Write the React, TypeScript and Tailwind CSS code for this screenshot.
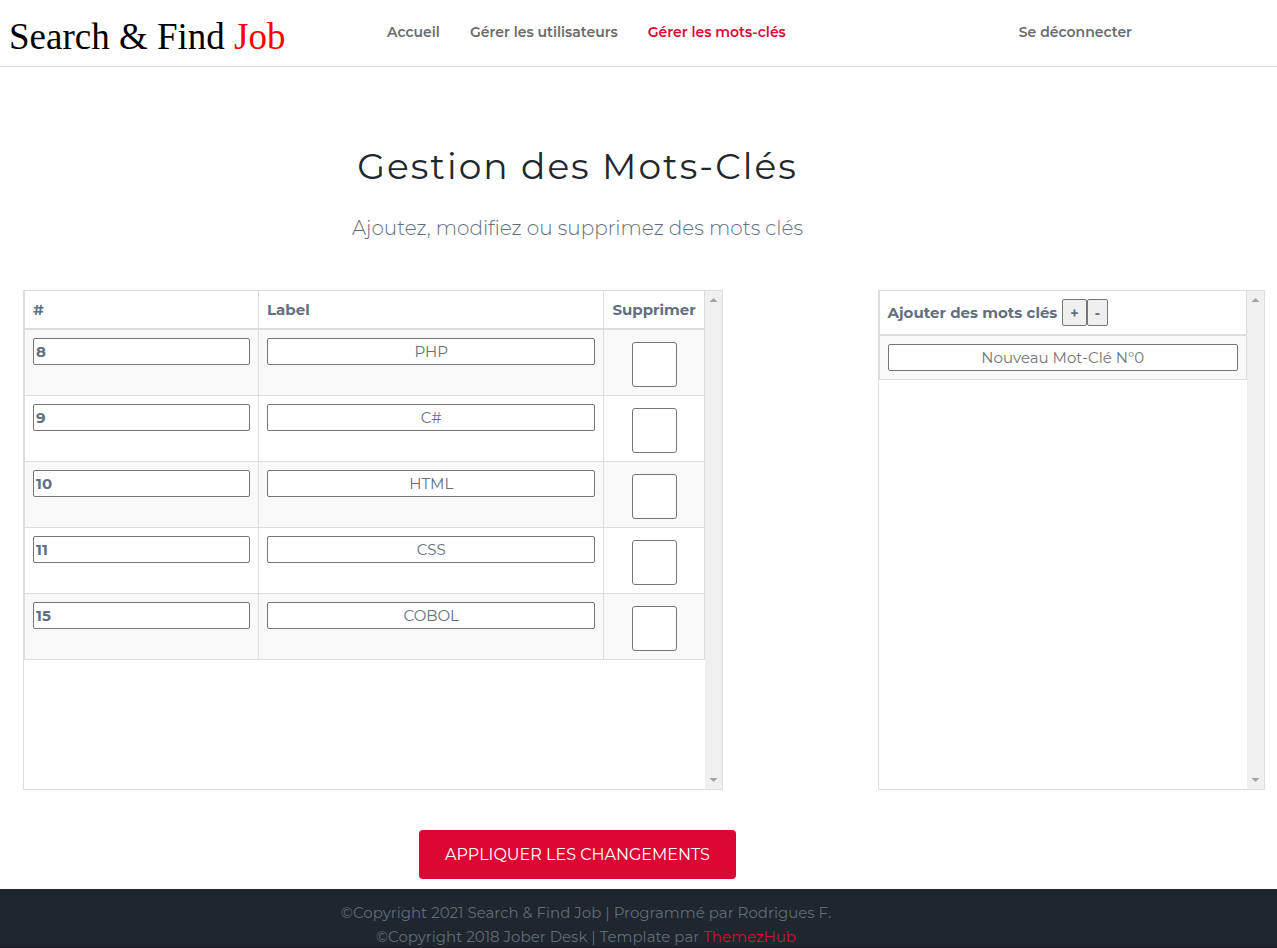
import type { ReactNode } from "react";

const keywords = [
  { id: 8, label: "PHP" },
  { id: 9, label: "C#" },
  { id: 10, label: "HTML" },
  { id: 11, label: "CSS" },
  { id: 15, label: "COBOL" },
];

const field = "block h-[27px] w-full rounded-xs border border-[#767676] bg-white px-0.5";
const cell = "border-r border-b border-[#dddddd] p-2 align-top";
const headCell = "border-r border-b-2 border-[#dddddd] px-2 text-left font-bold";
const smallButton = "h-[27px] rounded-xs border border-[#767676] bg-[#efefef] px-[7px] text-sm font-bold";

function ScrollPanel({ children, className }: { children: ReactNode; className: string }) {
  return (
    <div className={`flex h-[500px] border border-[#dddddd] ${className}`}>
      <div className="min-w-0 flex-1">{children}</div>
      <div className="flex w-[17px] shrink-0 flex-col items-center justify-between bg-[#f0f0f0] py-[7px]" aria-hidden="true">
        <svg width="9" height="4" viewBox="0 0 9 4" fill="#a3a3a3">
          <path d="M4.500 0 8.500 4H.5Z" />
        </svg>
        <svg width="9" height="4" viewBox="0 0 9 4" fill="#a3a3a3">
          <path d="M.5 0h8L4.500 4Z" />
        </svg>
      </div>
    </div>
  );
}

export default function App() {
  return (
    <div className="flex min-h-screen flex-col bg-white font-['Montserrat','Inter',sans-serif] text-[15px] leading-6 text-[#626f80]">
      <header className="flex h-[67px] items-center border-b border-[#dddddd]">
        <a href="#" className="w-[372px] shrink-0 pt-2 pl-[9px] font-['Liberation_Serif',serif] text-[37px] leading-10 whitespace-nowrap text-black">
          Search &amp; Find <span className="text-[#ff0000]">Job</span>
        </a>
        <nav className="flex flex-1 items-center pr-[145px] pb-0.5 text-sm font-semibold text-[#6b6b6b]">
          <a href="#" className="px-[15px]">Accueil</a>
          <a href="#" className="px-[15px]">Gérer les utilisateurs</a>
          <a href="#" className="px-[15px] text-[#da0833]" aria-current="page">Gérer les mots-clés</a>
          <a href="#" className="ml-auto">Se déconnecter</a>
        </nav>
      </header>

      <main className="flex-1 pb-2.5">
        <div className="pt-[74px] pr-[122px] text-center">
          <h1 className="text-4xl leading-[50px] font-normal tracking-[2px] text-[#1f272f]">Gestion des Mots-Clés</h1>
          <p className="mt-[21px] text-xl leading-8 font-light">Ajoutez, modifiez ou supprimez des mots clés</p>
        </div>

        <form onSubmit={(event) => event.preventDefault()}>
          <div className="mt-[46px] flex justify-between pr-3 pl-[23px]">
            <ScrollPanel className="w-[56.4%]">
              <table className="w-full table-fixed border-separate border-spacing-0 border-l border-[#dddddd]">
                <colgroup>
                  <col className="w-[234px]" />
                  <col />
                  <col className="w-[101px]" />
                </colgroup>
                <thead>
                  <tr className="h-[39px]">
                    <th className={headCell}>#</th>
                    <th className={headCell}>Label</th>
                    <th className={headCell}>Supprimer</th>
                  </tr>
                </thead>
                <tbody>
                  {keywords.map((keyword) => (
                    <tr key={keyword.id} className="h-[66px] odd:bg-[#f9f9f9]">
                      <td className={cell}>
                        <input aria-label="Identifiant" className={`${field} font-bold`} defaultValue={keyword.id} readOnly />
                      </td>
                      <td className={cell}>
                        <input aria-label="Label" className={`${field} text-center`} defaultValue={keyword.label} />
                      </td>
                      <td className={`${cell} pt-3`}>
                        <input
                          type="checkbox"
                          aria-label={`Supprimer ${keyword.label}`}
                          className="mx-auto block size-[45px] appearance-none rounded-[3px] border border-[#767676] bg-white checked:bg-[#da0833]"
                        />
                      </td>
                    </tr>
                  ))}
                </tbody>
              </table>
            </ScrollPanel>

            <ScrollPanel className="w-[31.2%]">
              <table className="w-full table-fixed border-separate border-spacing-0 border-l border-[#dddddd]">
                <thead>
                  <tr className="h-[45px]">
                    <th className={headCell}>
                      <div className="flex items-center">
                        <span className="mr-[5px]">Ajouter des mots clés</span>
                        <button type="button" className={smallButton}>+</button>
                        <button type="button" className={smallButton}>-</button>
                      </div>
                    </th>
                  </tr>
                </thead>
                <tbody>
                  <tr className="bg-[#f9f9f9]">
                    <td className={cell}>
                      <input
                        aria-label="Nouveau mot-clé"
                        placeholder="Nouveau Mot-Clé N°0"
                        className={`${field} text-center placeholder:text-[#757575]`}
                      />
                    </td>
                  </tr>
                </tbody>
              </table>
            </ScrollPanel>
          </div>

          <div className="mt-10 flex justify-center pr-[122px]">
            <button type="submit" className="h-[49px] rounded-sm bg-[#dc0833] px-[26px] text-base text-white uppercase">
              Appliquer les changements
            </button>
          </div>
        </form>
      </main>

      <footer className="h-[59px] overflow-hidden border-b border-[#1b1a26] bg-[#1f262d] pt-3 pr-[105px] text-center text-[#626c76]">
        <p>©Copyright 2021 Search &amp; Find Job | Programmé par Rodrigues F.</p>
        <p>
          ©Copyright 2018 Jober Desk | Template par <a href="#" className="text-[#da0833]">ThemezHub</a>
        </p>
      </footer>
    </div>
  );
}
